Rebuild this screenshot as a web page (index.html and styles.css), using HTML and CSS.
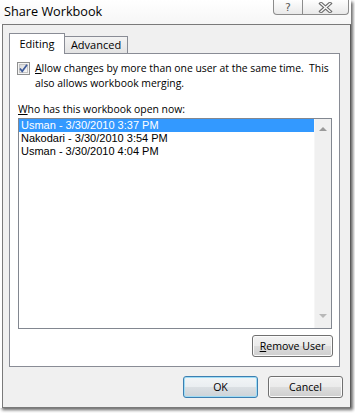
FILE: index.html
```html
<html lang="en-US">
<head>
	<title>Share Workbook</title>
	<meta charset="utf-8">
	<link rel="stylesheet" href="styles.css">
</head>
<body>
	<div class="window">
		<div class="titlebar">
			<div class="title">Share Workbook</div>
			<div class="caption">
				<div class="cap help">?</div>
				<div class="cap close">
					<svg width="17" height="11" viewBox="0 0 17 11">
						<path d="M4 1.5 L13 9.5 M13 1.5 L4 9.5" stroke="#6a6a6a" stroke-width="3.6" stroke-linecap="square"/>
						<path d="M4 1.5 L13 9.5 M13 1.5 L4 9.5" stroke="#fafafa" stroke-width="1.4" stroke-linecap="square"/>
					</svg>
				</div>
			</div>
		</div>

		<div class="frame">
			<div class="tabs">
				<div class="tab active">Editing</div>
				<div class="tab">Advanced</div>
			</div>

			<div class="panel">
				<div class="check-row">
					<svg class="checkbox" width="13" height="13" viewBox="0 0 13 13">
						<defs>
							<linearGradient id="cb" x1="0" y1="0" x2="1" y2="1">
								<stop offset="0" stop-color="#d8d8d8"/>
								<stop offset="1" stop-color="#fbfbfb"/>
							</linearGradient>
						</defs>
						<rect x="0.5" y="0.5" width="12" height="12" fill="#f4f4f4" stroke="#8e8f8f"/>
						<rect x="2.5" y="2.5" width="8" height="8" fill="url(#cb)" stroke="#c4c4c4"/>
						<path d="M3 6.5 L5.2 9.3 L10 2.8" fill="none" stroke="#3d5a9a" stroke-width="1.7"/>
					</svg>
					<div class="check-text"><u>A</u>llow changes by more than one user at the same time.&nbsp; This<br>also allows workbook merging.</div>
				</div>

				<div class="list-label"><u>W</u>ho has this workbook open now:</div>

				<div class="listbox">
					<ul class="items">
						<li class="selected">Usman - 3/30/2010 3:37 PM</li>
						<li>Nakodari - 3/30/2010 3:54 PM</li>
						<li>Usman - 3/30/2010 4:04 PM</li>
					</ul>
					<div class="scrollbar">
						<div class="arrow up"></div>
						<div class="arrow down"></div>
					</div>
				</div>

				<div class="remove-row">
					<button class="btn remove"><u>R</u>emove User</button>
				</div>
			</div>

			<div class="footer">
				<button class="btn default">OK</button>
				<button class="btn">Cancel</button>
			</div>
		</div>
	</div>
</body>
</html>
```

FILE: styles.css
```css
html, body {
	padding: 0;
	margin: 0;
	background: #fff;
	color: #000;
	font-family: "Open Sans", "Noto Sans", sans-serif;
	font-size: 10.4px;
}

*, *:before, *:after {
	box-sizing: border-box;
}

.window {
	display: flex;
	flex-direction: column;
	width: 351px;
	height: 408px;
	box-shadow: 2px 2px 3px rgba(0, 0, 0, .6);
}

.titlebar {
	display: flex;
	justify-content: space-between;
	height: 24px;
	background: linear-gradient(#fff, #f6f6f6);
}

.title {
	padding: 2px 0 0 4px;
	font-size: 12.7px;
}

.caption {
	display: flex;
	margin-right: 2px;
	height: 15px;
}

.cap {
	display: flex;
	align-items: center;
	justify-content: center;
	height: 15px;
	border: 1px solid #8c8c8c;
	border-top: none;
	background: linear-gradient(#fefefe, #e9e9e9);
}

.cap.help {
	width: 30px;
	border-radius: 0 0 0 4px;
	color: #5a5a5a;
	font-family: "DejaVu Sans", sans-serif;
	font-size: 11px;
	line-height: 13px;
}

.cap.close {
	width: 46px;
	border-left: none;
	border-radius: 0 0 4px 0;
}

.frame {
	display: flex;
	flex-direction: column;
	flex-grow: 1;
	margin-left: 2px;
	width: 349px;
	border: 1px solid #7a7a7a;
	border-right-color: #5a5a5a;
	background: #f0f0f0;
	padding: 8px 0 0 6px;
}

.tabs {
	display: flex;
	align-items: flex-end;
	height: 21px;
	margin-bottom: -1px;
	position: relative;
	z-index: 1;
}

.tab {
	border: 1px solid #898c95;
	border-bottom: none;
	background: linear-gradient(#f3f3f3, #e3e3e3);
	height: 17px;
	width: 64px;
	margin-bottom: 1px;
	margin-left: -1px;
	padding-top: 1px;
	text-align: center;
	line-height: 14px;
	font-size: 11px;
}

.tab.active {
	height: 21px;
	width: 56px;
	margin: 0;
	background: #fff;
	padding-top: 3px;
	position: relative;
	z-index: 1;
}

.panel {
	display: flex;
	flex-direction: column;
	width: 331px;
	height: 314px;
	border: 1px solid #898c95;
	background: #fff;
	padding-top: 7px;
}

.check-row {
	display: flex;
	align-items: flex-start;
	padding-left: 7px;
}

.checkbox {
	margin-top: 1px;
	flex-shrink: 0;
}

.check-text {
	margin-left: 5px;
	line-height: 15px;
	white-space: nowrap;
}

.list-label {
	margin: 11px 0 0 8px;
	line-height: 15px;
}

.listbox {
	display: flex;
	margin: 1px 0 0 8px;
	width: 314px;
	height: 211px;
	border: 1px solid #828790;
}

.items {
	flex-grow: 1;
	margin: 0;
	padding: 0;
	list-style: none;
	font-family: "Liberation Sans", sans-serif;
	font-size: 11px;
}

.items li {
	height: 13px;
	line-height: 13px;
	padding-left: 2px;
}

.items li.selected {
	background: #3399ff;
	color: #fff;
}

.scrollbar {
	display: flex;
	flex-direction: column;
	justify-content: space-between;
	width: 17px;
	background: #f0f0f0;
	border-left: 1px solid #f6f6f6;
	padding: 8px 0 10px 0;
}

.arrow {
	align-self: center;
	width: 0;
	height: 0;
	border-left: 4px solid transparent;
	border-right: 4px solid transparent;
}

.arrow.up {
	border-bottom: 4px solid #9a9a9a;
}

.arrow.down {
	border-top: 4px solid #b8b8b8;
}

.remove-row {
	display: flex;
	justify-content: flex-end;
	margin: 6px 6px 0 0;
}

.btn {
	height: 22px;
	padding: 0;
	border: 1px solid #707070;
	border-radius: 3px;
	background: linear-gradient(#f2f2f2 0%, #ebebeb 48%, #dddddd 52%, #cfcfcf 100%);
	box-shadow: inset 0 0 0 1px #fbfbfb;
	color: #000;
	font-family: "Open Sans", "Noto Sans", sans-serif;
	font-size: 10.6px;
}

.btn.remove {
	width: 81px;
}

.footer {
	display: flex;
	justify-content: flex-end;
	gap: 10px;
	margin-top: 9px;
	padding-right: 7px;
}

.footer .btn {
	width: 75px;
}

.btn.default {
	border-color: #3c7fb1;
	box-shadow: inset 0 0 0 1px #9fdcf5;
	background: linear-gradient(#f2f5f7 0%, #eaeef1 48%, #dadfe3 52%, #ccd3d8 100%);
}
```
